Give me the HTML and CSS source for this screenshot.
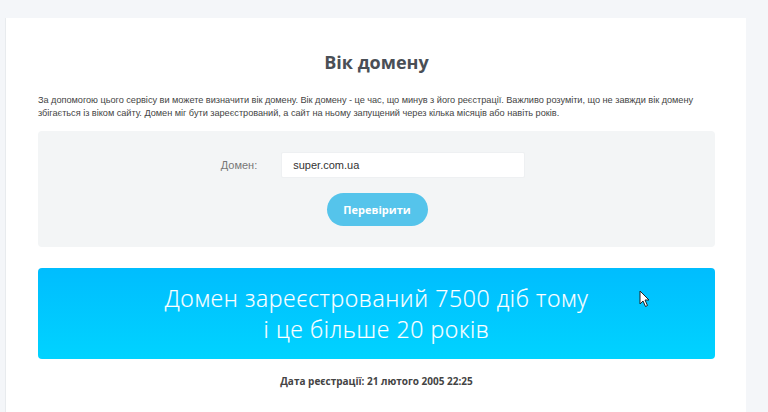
FILE: index.html
```html
<!DOCTYPE html>
<html lang="uk">
<head>
<meta charset="utf-8">
<title>Вік домену</title>
<link rel="stylesheet" href="styles.css">
</head>
<body>
<div class="page">
  <div class="card">
    <h1 class="title">Вік домену</h1>
    <p class="intro">За допомогою цього сервісу ви можете визначити вік домену. Вік домену - це час, що минув з його реєстрації. Важливо розуміти, що не завжди вік домену<br>збігається із віком сайту. Домен міг бути зареєстрований, а сайт на ньому запущений через кілька місяців або навіть років.</p>
    <form class="check-form">
      <div class="field-row">
        <label class="field-label" for="domain">Домен:</label>
        <input class="field-input" id="domain" type="text" value="super.com.ua">
      </div>
      <button class="check-btn" type="button">Перевірити</button>
    </form>
    <div class="result">
      <div class="result-line">Домен зареєстрований 7500 діб тому</div>
      <div class="result-line">і це більше 20 років</div>
      <svg class="cursor" width="12" height="18" viewBox="0 0 12 18"><path d="M1 1 L1 14 L4 11 L6.5 16.5 L8.5 15.5 L6 10 L10 10 Z" fill="#fff" stroke="#222" stroke-width="1"/></svg>
    </div>
    <p class="reg-date">Дата реєстрації: 21 лютого 2005 22:25</p>
  </div>
</div>
</body>
</html>
```
FILE: styles.css
```css
html, body {
  margin: 0;
  padding: 0;
  background: #f4f6f9;
  height: 100%;
  overflow: hidden;
}
.page {
  padding: 18px 22px 0 5px;
}
.card {
  width: 677px;
  min-height: 362px;
  background: #fff;
  border-left: 1px solid #e8ebee;
  padding: 32px 31px 0 32px;
  box-sizing: content-box;
  font-family: "Liberation Sans Narrow", "Liberation Sans", Arial, sans-serif;
  color: #444;
}
.title {
  margin: 0;
  font-family: "Open Sans", "Liberation Sans", sans-serif;
  font-weight: 700;
  font-size: 18px;
  line-height: 24px;
  text-align: center;
  color: #4a4f56;
}
.intro {
  margin: 20px 0 0;
  font-size: 9.2px;
  letter-spacing: -0.03px;
  line-height: 13px;
  color: #444;
  white-space: nowrap;
}
.check-form {
  margin-top: 11px;
  background: #f3f5f6;
  border-radius: 4px;
  padding: 21px 0;
  display: flex;
  flex-direction: column;
  align-items: center;
  gap: 15px;
}
.field-row {
  display: flex;
  align-items: center;
  gap: 24px;
  margin-left: -7px;
}
.field-label {
  font-size: 11px;
  color: #777;
}
.field-input {
  width: 244px;
  height: 26px;
  box-sizing: border-box;
  border: 1px solid #eef0f2;
  border-radius: 2px;
  background: #fff;
  padding: 0 11px;
  font-family: "Liberation Sans Narrow", "Liberation Sans", Arial, sans-serif;
  font-size: 11px;
  color: #333;
  outline: none;
}
.check-btn {
  width: 101px;
  height: 33px;
  border: none;
  border-radius: 17px;
  background: #55c4eb;
  color: #fff;
  font-family: "Open Sans", "Liberation Sans", sans-serif;
  font-weight: 700;
  font-size: 11px;
  margin-left: 1px;
  cursor: pointer;
}
.result {
  position: relative;
  margin-top: 21px;
  padding: 14.5px 0;
  border-radius: 4px;
  background: linear-gradient(180deg, #00bdfe 0%, #00d3ff 100%);
  text-align: center;
  color: #fff;
  font-family: "Open Sans", "Liberation Sans", sans-serif;
  font-weight: 300;
  font-size: 23px;
  letter-spacing: 0.6px;
  line-height: 31px;
  -webkit-text-stroke: 0.2px #fff;
}
.cursor {
  position: absolute;
  left: 601px;
  top: 22px;
}
.reg-date {
  margin: 15px 0 0;
  text-align: center;
  font-family: "Open Sans", "Liberation Sans", sans-serif;
  font-weight: 700;
  font-size: 10px;
  line-height: 14px;
  color: #444;
}
```
